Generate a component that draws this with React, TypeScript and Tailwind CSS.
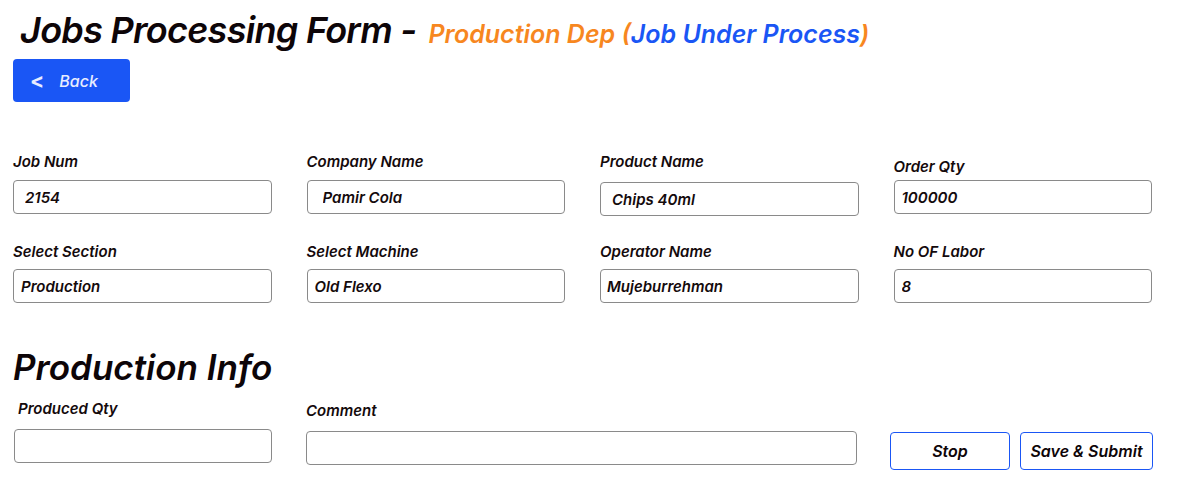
import React from "react";

type Field = {
    label: string;
    value: string;
    labelClass: string;
    inputClass: string;
};

// label/input offsets differ a little per field in the design, kept as-is
const topFields: Field[] = [
    {label: "Job Num", value: "2154", labelClass: "mt-0", inputClass: "mt-[8px] pl-[11px]"},
    {label: "Company Name", value: "Pamir Cola", labelClass: "mt-0", inputClass: "mt-[8px] pl-[15px]"},
    {label: "Product Name", value: "Chips 40ml", labelClass: "mt-0", inputClass: "mt-[10px] pl-[11px]"},
    {label: "Order Qty", value: "100000", labelClass: "mt-[5px]", inputClass: "mt-[3px] pl-[7px]"},
    {label: "Select Section", value: "Production", labelClass: "mt-0", inputClass: "mt-[7px] pl-[7px]"},
    {label: "Select Machine", value: "Old Flexo", labelClass: "mt-0", inputClass: "mt-[7px] pl-[7px]"},
    {label: "Operator Name", value: "Mujeburrehman", labelClass: "mt-0", inputClass: "mt-[7px] pl-[6px]"},
    {label: "No OF Labor", value: "8", labelClass: "mt-0", inputClass: "mt-[7px] pl-[7px]"},
];

const FormField: React.FC<{field: Field}> = ({field}) => {
    return (
        <div className="flex h-[62px] flex-col">
            <label className={`h-[20px] shrink-0 text-[15px] leading-[20px] font-semibold italic text-[#140a0c] ${field.labelClass}`}>
                {field.label}
            </label>
            <input
                type="text"
                readOnly
                value={field.value}
                className={`h-[34px] w-full shrink-0 rounded-[4px] border border-[#8a8a8a] bg-white text-[15px] font-semibold italic text-[#140a0c] focus:outline-none ${field.inputClass}`}
            />
        </div>
    );
};

const App: React.FC = () => {
    return (
        <div className="min-h-[500px] bg-white font-['Inter',sans-serif] text-[#0d0508]">
            <div className="pl-[13px] pt-[6px]">
                <h1 className="ml-[7px] flex items-baseline italic">
                    <span className="text-[36px] font-semibold leading-[48px] tracking-[-0.02em]">Jobs Processing Form -</span>
                    <span className="ml-[12px] text-[25px] font-semibold text-[#f7871f]">
                        Production Dep (<span className="text-[#1a56f5]">Job Under Process</span>)
                    </span>
                </h1>
                <button
                    type="button"
                    className="mt-[5px] flex h-[43px] w-[117px] items-center rounded-[4px] bg-[#1a56f5] pl-[17px] text-[16px] font-medium italic text-[#e8ecff]"
                >
                    <span className="mr-[15px] text-[21px] font-bold not-italic leading-none">&lt;</span>
                    Back
                </button>

                <div className="mt-[50px] grid w-[1139px] grid-cols-4 gap-x-[35px] gap-y-[28px]">
                    {topFields.map(field => (
                        <FormField key={field.label} field={field} />
                    ))}
                </div>

                <h2 className="mt-[43px] text-[35px] font-semibold italic leading-[40px]">Production Info</h2>

                <div className="mt-[12px] flex items-start">
                    <div className="flex w-[259px] flex-col pl-[1px]">
                        <label className="ml-[4px] h-[20px] text-[15px] font-semibold italic leading-[20px] text-[#140a0c]">
                            Produced Qty
                        </label>
                        <input
                            type="text"
                            className="mt-[10px] h-[34px] w-[258px] rounded-[4px] border border-[#8a8a8a] bg-white focus:outline-none"
                        />
                    </div>
                    <div className="ml-[34px] mt-[2px] flex w-[551px] flex-col">
                        <label className="h-[20px] text-[15px] font-semibold italic leading-[20px] text-[#140a0c]">
                            Comment
                        </label>
                        <input
                            type="text"
                            className="mt-[10px] h-[34px] w-full rounded-[4px] border border-[#8a8a8a] bg-white focus:outline-none"
                        />
                    </div>
                    <div className="ml-[33px] mt-[33px] flex gap-[10px]">
                        <button
                            type="button"
                            className="h-[38px] w-[120px] rounded-[4px] border border-[#1a56f5] bg-white text-[16px] font-semibold italic text-[#0d0508]"
                        >
                            Stop
                        </button>
                        <button
                            type="button"
                            className="h-[38px] w-[133px] rounded-[4px] border border-[#1a56f5] bg-white text-[16px] font-semibold italic text-[#0d0508]"
                        >
                            Save &amp; Submit
                        </button>
                    </div>
                </div>
            </div>
        </div>
    );
};

export default App;
